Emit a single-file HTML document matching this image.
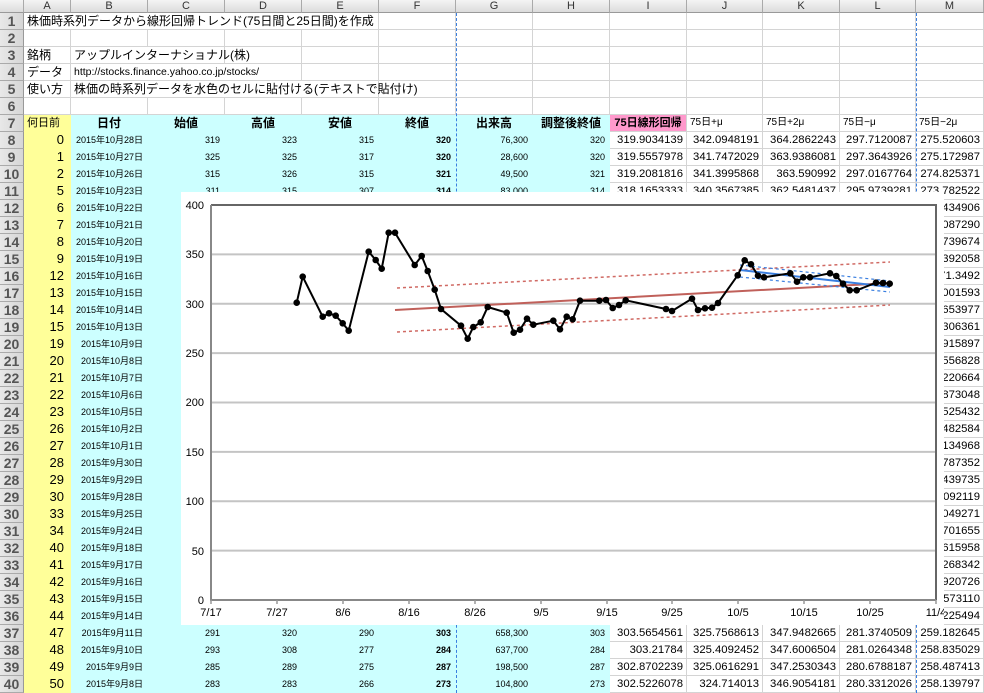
<!DOCTYPE html>
<html><head><meta charset="utf-8">
<style>
*{margin:0;padding:0;box-sizing:border-box}
body{width:984px;height:693px;overflow:hidden;background:#fff;font-family:"Liberation Sans","Noto Sans CJK JP",sans-serif;position:relative}
table{position:absolute;left:0;top:0;border-collapse:separate;border-spacing:0;table-layout:fixed;width:984px}
td{height:17px;border-right:1px solid #d4d4d4;border-bottom:1px solid #d4d4d4;font-size:12px;white-space:nowrap;overflow:visible;padding:0 3px;line-height:16px;color:#000}
tr.h td{height:13px;background:linear-gradient(#f4f4f4,#dcdcdc);border-right:1px solid #aaa;border-bottom:1px solid #999;text-align:center;font-size:11px;line-height:12px;color:#333}
td.r{background:linear-gradient(90deg,#e8e8e8,#d6d6d6);border-right:1px solid #999;border-bottom:1px solid #aaa;text-align:center;font-size:14px;font-weight:bold;color:#555;padding:0}
td.y{background:#ffff99;border-color:#ffff99;text-align:right;padding-right:6px;font-size:13px}
td.c{background:#ccffff;border-color:#ccffff;text-align:right;font-size:9px;padding-right:4px}
td.d{background:#ccffff;border-color:#ccffff;text-align:right;font-size:9px;padding-right:4px}
td.hd{background:#ccffff;border-color:#ccffff;text-align:center;font-size:12px;font-weight:bold}
td.b{font-weight:bold}
td.p{background:#ff99cc;text-align:center;font-weight:bold;font-size:11px}
td.n{text-align:right;font-size:11.3px;padding-right:3px}
td.s{font-size:10px}
.dash{position:absolute;top:13px;height:680px;border-left:1px dashed #3a7fe0}
</style></head><body>
<table>
<colgroup><col style="width:24px"><col style="width:47px"><col style="width:77px"><col style="width:77px"><col style="width:77px"><col style="width:77px"><col style="width:77px"><col style="width:77px"><col style="width:77px"><col style="width:77px"><col style="width:76px"><col style="width:77px"><col style="width:76px"><col style="width:68px"></colgroup>
<tr class="h"><td></td><td>A</td><td>B</td><td>C</td><td>D</td><td>E</td><td>F</td><td>G</td><td>H</td><td>I</td><td>J</td><td>K</td><td>L</td><td>M</td></tr>
<tr><td class="r">1</td><td style="border-right:none">株価時系列データから線形回帰トレンド(75日間と25日間)を作成</td><td style="border-right:none"></td><td style="border-right:none"></td><td style="border-right:none"></td><td></td><td></td><td></td><td></td><td></td><td></td><td></td><td></td><td></td></tr>
<tr><td class="r">2</td><td></td><td></td><td></td><td></td><td></td><td></td><td></td><td></td><td></td><td></td><td></td><td></td><td></td></tr>
<tr><td class="r">3</td><td>銘柄</td><td style="border-right:none">アップルインターナショナル(株)</td><td></td><td></td><td></td><td></td><td></td><td></td><td></td><td></td><td></td><td></td><td></td></tr>
<tr><td class="r">4</td><td>データ</td><td style="border-right:none;font-size:10.5px">http://stocks.finance.yahoo.co.jp/stocks/</td><td style="border-right:none"></td><td></td><td></td><td></td><td></td><td></td><td></td><td></td><td></td><td></td><td></td></tr>
<tr><td class="r">5</td><td>使い方</td><td style="border-right:none">株価の時系列データを水色のセルに貼付ける(テキストで貼付け)</td><td style="border-right:none"></td><td style="border-right:none"></td><td></td><td></td><td></td><td></td><td></td><td></td><td></td><td></td><td></td></tr>
<tr><td class="r">6</td><td></td><td></td><td></td><td></td><td></td><td></td><td></td><td></td><td></td><td></td><td></td><td></td><td></td></tr>
<tr><td class="r">7</td><td class="y" style="text-align:left;padding-left:3px;font-size:11px">何日前</td><td class="hd">日付</td><td class="hd">始値</td><td class="hd">高値</td><td class="hd">安値</td><td class="hd">終値</td><td class="hd">出来高</td><td class="hd">調整後終値</td><td class="p">75日線形回帰</td><td class="s">75日+μ</td><td class="s">75日+2μ</td><td class="s">75日−μ</td><td class="s">75日−2μ</td></tr>
<tr><td class="r">8</td><td class="y">0</td><td class="d">2015年10月28日</td><td class="c">319</td><td class="c">323</td><td class="c">315</td><td class="c b">320</td><td class="c">76,300</td><td class="c">320</td><td class="n">319.9034139</td><td class="n">342.0948191</td><td class="n">364.2862243</td><td class="n">297.7120087</td><td class="n">275.520603</td></tr>
<tr><td class="r">9</td><td class="y">1</td><td class="d">2015年10月27日</td><td class="c">325</td><td class="c">325</td><td class="c">317</td><td class="c b">320</td><td class="c">28,600</td><td class="c">320</td><td class="n">319.5557978</td><td class="n">341.7472029</td><td class="n">363.9386081</td><td class="n">297.3643926</td><td class="n">275.172987</td></tr>
<tr><td class="r">10</td><td class="y">2</td><td class="d">2015年10月26日</td><td class="c">315</td><td class="c">326</td><td class="c">315</td><td class="c b">321</td><td class="c">49,500</td><td class="c">321</td><td class="n">319.2081816</td><td class="n">341.3995868</td><td class="n">363.590992</td><td class="n">297.0167764</td><td class="n">274.825371</td></tr>
<tr><td class="r">11</td><td class="y">5</td><td class="d">2015年10月23日</td><td class="c">311</td><td class="c">315</td><td class="c">307</td><td class="c b">314</td><td class="c">83,000</td><td class="c">314</td><td class="n">318.1653333</td><td class="n">340.3567385</td><td class="n">362.5481437</td><td class="n">295.9739281</td><td class="n">273.782522</td></tr>
<tr><td class="r">12</td><td class="y">6</td><td class="d">2015年10月22日</td><td class="c"></td><td class="c"></td><td class="c"></td><td class="c"></td><td class="c"></td><td class="c"></td><td></td><td></td><td></td><td></td><td class="n">273.434906</td></tr>
<tr><td class="r">13</td><td class="y">7</td><td class="d">2015年10月21日</td><td class="c"></td><td class="c"></td><td class="c"></td><td class="c"></td><td class="c"></td><td class="c"></td><td></td><td></td><td></td><td></td><td class="n">273.087290</td></tr>
<tr><td class="r">14</td><td class="y">8</td><td class="d">2015年10月20日</td><td class="c"></td><td class="c"></td><td class="c"></td><td class="c"></td><td class="c"></td><td class="c"></td><td></td><td></td><td></td><td></td><td class="n">272.739674</td></tr>
<tr><td class="r">15</td><td class="y">9</td><td class="d">2015年10月19日</td><td class="c"></td><td class="c"></td><td class="c"></td><td class="c"></td><td class="c"></td><td class="c"></td><td></td><td></td><td></td><td></td><td class="n">272.392058</td></tr>
<tr><td class="r">16</td><td class="y">12</td><td class="d">2015年10月16日</td><td class="c"></td><td class="c"></td><td class="c"></td><td class="c"></td><td class="c"></td><td class="c"></td><td></td><td></td><td></td><td></td><td class="n">271.3492</td></tr>
<tr><td class="r">17</td><td class="y">13</td><td class="d">2015年10月15日</td><td class="c"></td><td class="c"></td><td class="c"></td><td class="c"></td><td class="c"></td><td class="c"></td><td></td><td></td><td></td><td></td><td class="n">271.001593</td></tr>
<tr><td class="r">18</td><td class="y">14</td><td class="d">2015年10月14日</td><td class="c"></td><td class="c"></td><td class="c"></td><td class="c"></td><td class="c"></td><td class="c"></td><td></td><td></td><td></td><td></td><td class="n">270.653977</td></tr>
<tr><td class="r">19</td><td class="y">15</td><td class="d">2015年10月13日</td><td class="c"></td><td class="c"></td><td class="c"></td><td class="c"></td><td class="c"></td><td class="c"></td><td></td><td></td><td></td><td></td><td class="n">270.306361</td></tr>
<tr><td class="r">20</td><td class="y">19</td><td class="d">2015年10月9日</td><td class="c"></td><td class="c"></td><td class="c"></td><td class="c"></td><td class="c"></td><td class="c"></td><td></td><td></td><td></td><td></td><td class="n">268.915897</td></tr>
<tr><td class="r">21</td><td class="y">20</td><td class="d">2015年10月8日</td><td class="c"></td><td class="c"></td><td class="c"></td><td class="c"></td><td class="c"></td><td class="c"></td><td></td><td></td><td></td><td></td><td class="n">268.556828</td></tr>
<tr><td class="r">22</td><td class="y">21</td><td class="d">2015年10月7日</td><td class="c"></td><td class="c"></td><td class="c"></td><td class="c"></td><td class="c"></td><td class="c"></td><td></td><td></td><td></td><td></td><td class="n">268.220664</td></tr>
<tr><td class="r">23</td><td class="y">22</td><td class="d">2015年10月6日</td><td class="c"></td><td class="c"></td><td class="c"></td><td class="c"></td><td class="c"></td><td class="c"></td><td></td><td></td><td></td><td></td><td class="n">267.873048</td></tr>
<tr><td class="r">24</td><td class="y">23</td><td class="d">2015年10月5日</td><td class="c"></td><td class="c"></td><td class="c"></td><td class="c"></td><td class="c"></td><td class="c"></td><td></td><td></td><td></td><td></td><td class="n">267.525432</td></tr>
<tr><td class="r">25</td><td class="y">26</td><td class="d">2015年10月2日</td><td class="c"></td><td class="c"></td><td class="c"></td><td class="c"></td><td class="c"></td><td class="c"></td><td></td><td></td><td></td><td></td><td class="n">266.482584</td></tr>
<tr><td class="r">26</td><td class="y">27</td><td class="d">2015年10月1日</td><td class="c"></td><td class="c"></td><td class="c"></td><td class="c"></td><td class="c"></td><td class="c"></td><td></td><td></td><td></td><td></td><td class="n">266.134968</td></tr>
<tr><td class="r">27</td><td class="y">28</td><td class="d">2015年9月30日</td><td class="c"></td><td class="c"></td><td class="c"></td><td class="c"></td><td class="c"></td><td class="c"></td><td></td><td></td><td></td><td></td><td class="n">265.787352</td></tr>
<tr><td class="r">28</td><td class="y">29</td><td class="d">2015年9月29日</td><td class="c"></td><td class="c"></td><td class="c"></td><td class="c"></td><td class="c"></td><td class="c"></td><td></td><td></td><td></td><td></td><td class="n">265.439735</td></tr>
<tr><td class="r">29</td><td class="y">30</td><td class="d">2015年9月28日</td><td class="c"></td><td class="c"></td><td class="c"></td><td class="c"></td><td class="c"></td><td class="c"></td><td></td><td></td><td></td><td></td><td class="n">265.092119</td></tr>
<tr><td class="r">30</td><td class="y">33</td><td class="d">2015年9月25日</td><td class="c"></td><td class="c"></td><td class="c"></td><td class="c"></td><td class="c"></td><td class="c"></td><td></td><td></td><td></td><td></td><td class="n">264.049271</td></tr>
<tr><td class="r">31</td><td class="y">34</td><td class="d">2015年9月24日</td><td class="c"></td><td class="c"></td><td class="c"></td><td class="c"></td><td class="c"></td><td class="c"></td><td></td><td></td><td></td><td></td><td class="n">263.701655</td></tr>
<tr><td class="r">32</td><td class="y">40</td><td class="d">2015年9月18日</td><td class="c"></td><td class="c"></td><td class="c"></td><td class="c"></td><td class="c"></td><td class="c"></td><td></td><td></td><td></td><td></td><td class="n">261.615958</td></tr>
<tr><td class="r">33</td><td class="y">41</td><td class="d">2015年9月17日</td><td class="c"></td><td class="c"></td><td class="c"></td><td class="c"></td><td class="c"></td><td class="c"></td><td></td><td></td><td></td><td></td><td class="n">261.268342</td></tr>
<tr><td class="r">34</td><td class="y">42</td><td class="d">2015年9月16日</td><td class="c"></td><td class="c"></td><td class="c"></td><td class="c"></td><td class="c"></td><td class="c"></td><td></td><td></td><td></td><td></td><td class="n">260.920726</td></tr>
<tr><td class="r">35</td><td class="y">43</td><td class="d">2015年9月15日</td><td class="c"></td><td class="c"></td><td class="c"></td><td class="c"></td><td class="c"></td><td class="c"></td><td></td><td></td><td></td><td></td><td class="n">260.573110</td></tr>
<tr><td class="r">36</td><td class="y">44</td><td class="d">2015年9月14日</td><td class="c"></td><td class="c"></td><td class="c"></td><td class="c"></td><td class="c"></td><td class="c"></td><td></td><td></td><td></td><td></td><td class="n">260.225494</td></tr>
<tr><td class="r">37</td><td class="y">47</td><td class="d">2015年9月11日</td><td class="c">291</td><td class="c">320</td><td class="c">290</td><td class="c b">303</td><td class="c">658,300</td><td class="c">303</td><td class="n">303.5654561</td><td class="n">325.7568613</td><td class="n">347.9482665</td><td class="n">281.3740509</td><td class="n">259.182645</td></tr>
<tr><td class="r">38</td><td class="y">48</td><td class="d">2015年9月10日</td><td class="c">293</td><td class="c">308</td><td class="c">277</td><td class="c b">284</td><td class="c">637,700</td><td class="c">284</td><td class="n">303.21784</td><td class="n">325.4092452</td><td class="n">347.6006504</td><td class="n">281.0264348</td><td class="n">258.835029</td></tr>
<tr><td class="r">39</td><td class="y">49</td><td class="d">2015年9月9日</td><td class="c">285</td><td class="c">289</td><td class="c">275</td><td class="c b">287</td><td class="c">198,500</td><td class="c">287</td><td class="n">302.8702239</td><td class="n">325.0616291</td><td class="n">347.2530343</td><td class="n">280.6788187</td><td class="n">258.487413</td></tr>
<tr><td class="r">40</td><td class="y">50</td><td class="d">2015年9月8日</td><td class="c">283</td><td class="c">283</td><td class="c">266</td><td class="c b">273</td><td class="c">104,800</td><td class="c">273</td><td class="n">302.5226078</td><td class="n">324.714013</td><td class="n">346.9054181</td><td class="n">280.3312026</td><td class="n">258.139797</td></tr>
</table>
<div class="dash" style="left:456px"></div>
<div class="dash" style="left:916px"></div>
<svg style="position:absolute;left:181px;top:192px" width="763" height="433" viewBox="181 192 763 433" font-family="Liberation Sans, sans-serif">
<rect x="181" y="192" width="763" height="433" fill="#fff"/>
<g stroke="#c4c4c4" stroke-width="2">
<line x1="211" y1="254.4" x2="936" y2="254.4"/><line x1="211" y1="303.8" x2="936" y2="303.8"/><line x1="211" y1="353.1" x2="936" y2="353.1"/><line x1="211" y1="402.5" x2="936" y2="402.5"/><line x1="211" y1="451.9" x2="936" y2="451.9"/><line x1="211" y1="501.3" x2="936" y2="501.3"/><line x1="211" y1="550.6" x2="936" y2="550.6"/>
</g>
<path d="M211 205H936V600" fill="none" stroke="#666" stroke-width="2"/>
<path d="M211 205V600H936" fill="none" stroke="#888" stroke-width="2"/>
<g stroke="#999" stroke-width="1.5">
<line x1="211" y1="600" x2="211" y2="604"/><line x1="277" y1="600" x2="277" y2="604"/><line x1="343" y1="600" x2="343" y2="604"/><line x1="409" y1="600" x2="409" y2="604"/><line x1="475" y1="600" x2="475" y2="604"/><line x1="541" y1="600" x2="541" y2="604"/><line x1="607" y1="600" x2="607" y2="604"/><line x1="672" y1="600" x2="672" y2="604"/><line x1="738" y1="600" x2="738" y2="604"/><line x1="804" y1="600" x2="804" y2="604"/><line x1="870" y1="600" x2="870" y2="604"/><line x1="936" y1="600" x2="936" y2="604"/>
</g>
<g font-size="11" text-anchor="end">
<text x="204" y="209">400</text><text x="204" y="258">350</text><text x="204" y="308">300</text><text x="204" y="357">250</text><text x="204" y="406">200</text><text x="204" y="456">150</text><text x="204" y="505">100</text><text x="204" y="555">50</text><text x="204" y="604">0</text>
</g>
<g font-size="11" text-anchor="middle">
<text x="211" y="616">7/17</text><text x="277" y="616">7/27</text><text x="343" y="616">8/6</text><text x="409" y="616">8/16</text><text x="475" y="616">8/26</text><text x="541" y="616">9/5</text><text x="607" y="616">9/15</text><text x="672" y="616">9/25</text><text x="738" y="616">10/5</text><text x="804" y="616">10/15</text><text x="870" y="616">10/25</text><text x="936" y="616">11/4</text>
</g>
<line x1="395" y1="310" x2="890" y2="283" stroke="#c0605a" stroke-width="2"/>
<line x1="397" y1="288" x2="890" y2="262" stroke="#d06a64" stroke-width="1.5" stroke-dasharray="3,3"/>
<line x1="397" y1="332" x2="890" y2="305" stroke="#d06a64" stroke-width="1.5" stroke-dasharray="3,3"/>
<line x1="740" y1="270" x2="890" y2="287" stroke="#3a7fe0" stroke-width="2"/>
<line x1="740" y1="265" x2="890" y2="281" stroke="#3a7fe0" stroke-width="1.2" stroke-dasharray="3,3"/>
<line x1="740" y1="277" x2="890" y2="292" stroke="#3a7fe0" stroke-width="1.2" stroke-dasharray="3,3"/>
<polyline fill="none" stroke="#000" stroke-width="2" points="296.7,302.7 302.7,276.7 322.7,316.7 329,313.3 335.7,315.7 342.7,323.3 348.7,330.7 368.7,251.7 375.7,260 381.7,268.7 388.7,232.7 395,232.7 414.7,265 421.7,256 427.7,271 434.7,289.7 441,309 461,325.7 467.7,338.7 473.3,327 480.7,322.3 487.7,307 506.7,312.7 513.7,332.7 520,329.7 527,318.7 533.3,324.7 553.3,320.7 560,329.3 566.7,316.7 572.7,319.3 580,300.7 599.3,300.7 606,300 612.7,308 619,305 625.7,300.3 666,309 672,311 692,298.7 698,310 705,308.3 712,307.7 718,303 737.7,275.3 744.7,260.3 751,264.3 758,275.7 764,277.3 790.3,273.3 797,281.7 803.3,277.3 810,277.3 830,273.3 836.3,276 843,283.7 849.7,290.3 856.7,290.3 876,282.7 883,283 889.7,283.7"/>
<g fill="#000">
<circle cx="296.7" cy="302.7" r="3.3"/><circle cx="302.7" cy="276.7" r="3.3"/><circle cx="322.7" cy="316.7" r="3.3"/><circle cx="329" cy="313.3" r="3.3"/><circle cx="335.7" cy="315.7" r="3.3"/><circle cx="342.7" cy="323.3" r="3.3"/><circle cx="348.7" cy="330.7" r="3.3"/><circle cx="368.7" cy="251.7" r="3.3"/><circle cx="375.7" cy="260" r="3.3"/><circle cx="381.7" cy="268.7" r="3.3"/><circle cx="388.7" cy="232.7" r="3.3"/><circle cx="395" cy="232.7" r="3.3"/><circle cx="414.7" cy="265" r="3.3"/><circle cx="421.7" cy="256" r="3.3"/><circle cx="427.7" cy="271" r="3.3"/><circle cx="434.7" cy="289.7" r="3.3"/><circle cx="441" cy="309" r="3.3"/><circle cx="461" cy="325.7" r="3.3"/><circle cx="467.7" cy="338.7" r="3.3"/><circle cx="473.3" cy="327" r="3.3"/><circle cx="480.7" cy="322.3" r="3.3"/><circle cx="487.7" cy="307" r="3.3"/><circle cx="506.7" cy="312.7" r="3.3"/><circle cx="513.7" cy="332.7" r="3.3"/><circle cx="520" cy="329.7" r="3.3"/><circle cx="527" cy="318.7" r="3.3"/><circle cx="533.3" cy="324.7" r="3.3"/><circle cx="553.3" cy="320.7" r="3.3"/><circle cx="560" cy="329.3" r="3.3"/><circle cx="566.7" cy="316.7" r="3.3"/><circle cx="572.7" cy="319.3" r="3.3"/><circle cx="580" cy="300.7" r="3.3"/><circle cx="599.3" cy="300.7" r="3.3"/><circle cx="606" cy="300" r="3.3"/><circle cx="612.7" cy="308" r="3.3"/><circle cx="619" cy="305" r="3.3"/><circle cx="625.7" cy="300.3" r="3.3"/><circle cx="666" cy="309" r="3.3"/><circle cx="672" cy="311" r="3.3"/><circle cx="692" cy="298.7" r="3.3"/><circle cx="698" cy="310" r="3.3"/><circle cx="705" cy="308.3" r="3.3"/><circle cx="712" cy="307.7" r="3.3"/><circle cx="718" cy="303" r="3.3"/><circle cx="737.7" cy="275.3" r="3.3"/><circle cx="744.7" cy="260.3" r="3.3"/><circle cx="751" cy="264.3" r="3.3"/><circle cx="758" cy="275.7" r="3.3"/><circle cx="764" cy="277.3" r="3.3"/><circle cx="790.3" cy="273.3" r="3.3"/><circle cx="797" cy="281.7" r="3.3"/><circle cx="803.3" cy="277.3" r="3.3"/><circle cx="810" cy="277.3" r="3.3"/><circle cx="830" cy="273.3" r="3.3"/><circle cx="836.3" cy="276" r="3.3"/><circle cx="843" cy="283.7" r="3.3"/><circle cx="849.7" cy="290.3" r="3.3"/><circle cx="856.7" cy="290.3" r="3.3"/><circle cx="876" cy="282.7" r="3.3"/><circle cx="883" cy="283" r="3.3"/><circle cx="889.7" cy="283.7" r="3.3"/>
</g>
</svg>
</body></html>
